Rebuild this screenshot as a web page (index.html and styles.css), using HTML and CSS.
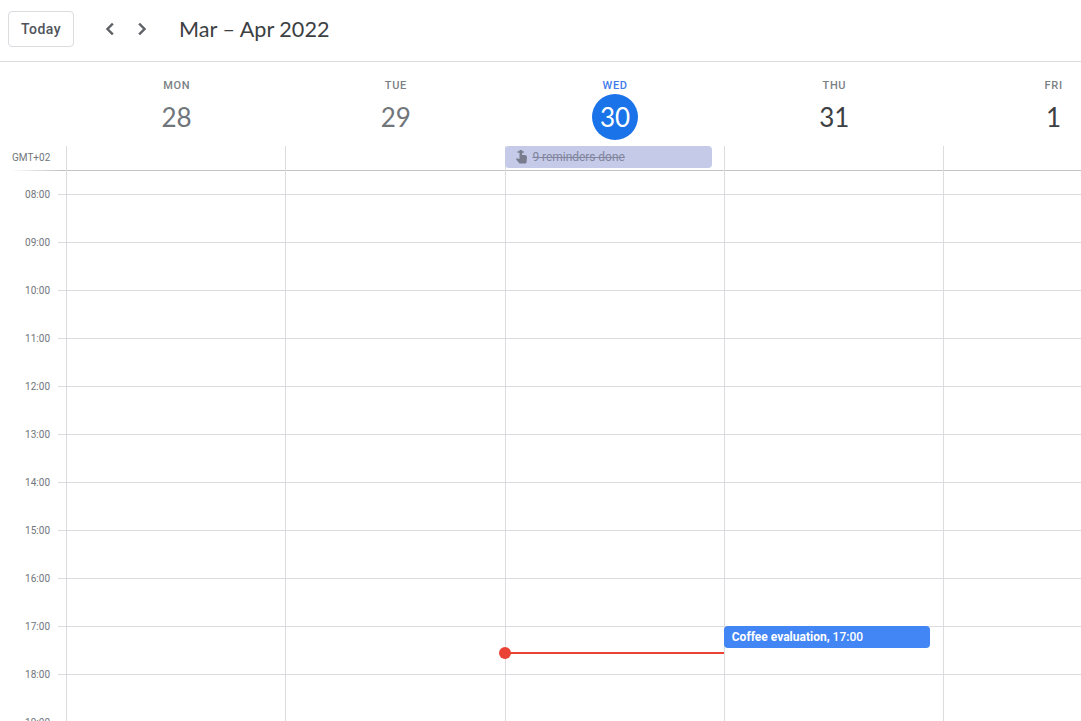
FILE: index.html
```html
<!DOCTYPE html>
<html lang="en">
<head>
<meta charset="utf-8">
<title>Calendar</title>
<link rel="stylesheet" href="styles.css">
</head>
<body>
<div class="app">
  <header class="toolbar">
    <button class="today-btn">Today</button>
    <nav class="nav-arrows">
      <button class="arrow"><svg viewBox="0 0 24 24" width="24" height="24"><path d="M15.41 7.41L14 6l-6 6 6 6 1.41-1.41L10.83 12z"/></svg></button>
      <button class="arrow"><svg viewBox="0 0 24 24" width="24" height="24"><path d="M10 6L8.59 7.41 13.17 12l-4.58 4.59L10 18l6-6z"/></svg></button>
    </nav>
    <h1 class="range">Mar – Apr 2022</h1>
  </header>

  <section class="day-heads">
    <div class="day past"><span class="dow">MON</span><span class="num">28</span></div>
    <div class="day past"><span class="dow">TUE</span><span class="num">29</span></div>
    <div class="day today"><span class="dow">WED</span><span class="num">30</span></div>
    <div class="day"><span class="dow">THU</span><span class="num">31</span></div>
    <div class="day"><span class="dow">FRI</span><span class="num">1</span></div>
  </section>

  <section class="body">
    <div class="allday"><div class="tz"><span>GMT+02</span></div><div class="allday-line"></div></div>
    <div class="timeline">
      <div class="hour"><span class="hour-label">08:00</span><i class="hour-line"></i></div>
      <div class="hour"><span class="hour-label">09:00</span><i class="hour-line"></i></div>
      <div class="hour"><span class="hour-label">10:00</span><i class="hour-line"></i></div>
      <div class="hour"><span class="hour-label">11:00</span><i class="hour-line"></i></div>
      <div class="hour"><span class="hour-label">12:00</span><i class="hour-line"></i></div>
      <div class="hour"><span class="hour-label">13:00</span><i class="hour-line"></i></div>
      <div class="hour"><span class="hour-label">14:00</span><i class="hour-line"></i></div>
      <div class="hour"><span class="hour-label">15:00</span><i class="hour-line"></i></div>
      <div class="hour"><span class="hour-label">16:00</span><i class="hour-line"></i></div>
      <div class="hour"><span class="hour-label">17:00</span><i class="hour-line"></i></div>
      <div class="hour"><span class="hour-label">18:00</span><i class="hour-line"></i></div>
      <div class="hour"><span class="hour-label">19:00</span><i class="hour-line"></i></div>
    </div>
    <div class="columns">
      <div class="col"></div>
      <div class="col"></div>
      <div class="col">
        <div class="chip-reminders">
          <svg class="chip-icon" viewBox="0 0 14 14" width="14" height="14"><path d="M3.5 1.2h2V0h2.6v1.2h1.7v1.5H8.1V5h3q1.9.4 1.9 2.2l-.5 5.3q-.3.9-1.3.9H5.5L2 9.2l.8-.9 2.7.7V2.7h-2z"/></svg>
          <span class="chip-text">9 reminders done</span>
        </div>
        <div class="now-line"></div>
      </div>
      <div class="col">
        <div class="event"><b>Coffee evaluation,</b> 17:00</div>
      </div>
      <div class="col"></div>
    </div>
  </section>
</div>
</body>
</html>
```

FILE: styles.css
```css
* { box-sizing: border-box; }
html, body { margin: 0; height: 100%; }
body { background: #fff; font-family: Roboto, "Liberation Sans", sans-serif; color: #3c4043; overflow: hidden; }
.app { height: 721px; overflow: hidden; display: flex; flex-direction: column; }

.toolbar { flex: none; height: 62px; padding: 0 0 3px 8px; display: flex; align-items: center; border-bottom: 1px solid #dadce0; }
.today-btn { width: 66px; height: 36px; padding: 0; background: #fff; border: 1px solid #dadce0; border-radius: 4px; font: 500 14px Roboto, sans-serif; color: #50545a; letter-spacing: .45px; }
.nav-arrows { display: flex; gap: 8px; margin-left: 24px; }
.arrow { width: 24px; height: 24px; padding: 0; border: 0; background: none; display: flex; }
.arrow svg { fill: #5f6368; stroke: #5f6368; stroke-width: .5; }
.range { margin: 0 0 0 25px; font: 400 21.6px/28px Lato, sans-serif; color: #3c4043; white-space: nowrap; }

.day-heads { flex: none; height: 84px; padding-left: 67px; display: flex; }
.day { flex: none; width: 219.25px; display: flex; flex-direction: column; align-items: center; padding-top: 17px; color: #3c4043; }
.dow { font-size: 11px; font-weight: 500; line-height: 13px; letter-spacing: .65px; color: #7a7f85; }
.num { width: 46px; height: 46px; margin-top: 2px; border-radius: 50%; display: flex; align-items: center; justify-content: center; font: 400 26px Lato, sans-serif; }
.past .num { color: #70757a; }
.today .dow { color: #3f7bea; }
.today .num { background: #1a73e8; color: #fff; }

.body { flex: 1; position: relative; overflow: hidden; }
.allday { height: 25px; display: flex; }
.tz { width: 66px; font-size: 10px; line-height: 12px; padding: 6px 0 0 12px; color: #70757a; background: linear-gradient(to right, #fff 10px, #bdbdbd) left bottom / 100% 1px no-repeat; }
.allday-line { flex: 1; border-bottom: 1px solid #c4c4c4; }
.timeline { display: flex; flex-direction: column; }
.hour { flex: none; height: 48px; display: flex; align-items: flex-start; }
.hour-label { width: 50px; height: 47px; line-height: 47px; text-align: right; font-size: 10px; color: #70757a; }
.hour-line { flex: 1; height: 1px; margin: 23px 0 0 8px; background: #dadce0; }

.columns { position: absolute; left: 66px; top: 0; bottom: 0; display: flex; }
.col { flex: none; width: 219.25px; position: relative; border-left: 1px solid #dadce0; }
.chip-reminders { position: absolute; left: -1px; top: 0; width: 207px; height: 22px; border-radius: 4px; background: #c5cae9; display: flex; align-items: center; padding-left: 9px; gap: 5px; color: #81859b; }
.chip-icon { fill: #787c8c; flex: none; }
.chip-text { font-size: 12px; font-weight: 400; text-decoration: line-through; letter-spacing: -.05px; }
.event { position: absolute; left: -1px; top: 480px; width: 206px; height: 22px; border-radius: 4px; background: #4285f4; color: #fff; font-size: 12px; font-weight: 500; line-height: 22px; padding-left: 8px; white-space: nowrap; }
.event b { font-weight: 700; }
.now-line { position: absolute; left: -1px; right: 0; top: 506px; height: 2px; background: #ea4335; }
.now-line::before { content: ""; position: absolute; left: -6px; top: -5px; width: 12px; height: 12px; border-radius: 50%; background: #ea4335; }
```
